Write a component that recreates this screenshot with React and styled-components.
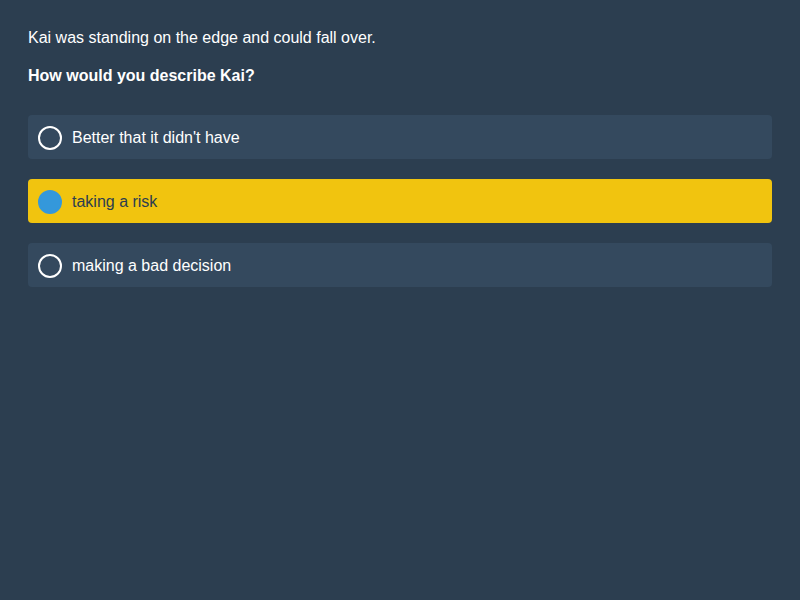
import React, { useState } from "react";
import styled, { createGlobalStyle } from "styled-components";

const GlobalStyle = createGlobalStyle`
  html, body {
    margin: 0;
    padding: 0;
    background: #2c3e50;
  }
  body {
    font-family: "Liberation Sans", Arial, sans-serif;
    min-height: 600px;
  }
`;

const Page = styled.div`
  padding: 29px 28px 28px;
  color: #ffffff;
  font-size: 16px;
`;

const Story = styled.p`
  margin: 0;
  line-height: 18px;
`;

const Question = styled.p`
  margin: 20px 0 30px;
  line-height: 18px;
  font-weight: 700;
`;

const Options = styled.div`
  display: flex;
  flex-direction: column;
  gap: 20px;
`;

const Option = styled.label`
  display: flex;
  align-items: center;
  gap: 10px;
  height: 44px;
  padding: 2px 10px 0;
  border-radius: 4px;
  box-sizing: border-box;
  cursor: pointer;
  background: ${({ selected }) => (selected ? "#f1c40f" : "#34495e")};
  color: ${({ selected }) => (selected ? "#2c3e50" : "#ffffff")};
`;

const Radio = styled.span`
  width: 24px;
  height: 24px;
  border-radius: 50%;
  box-sizing: border-box;
  flex-shrink: 0;
  border: 2px solid ${({ selected }) => (selected ? "#3498db" : "#ffffff")};
  background: ${({ selected }) => (selected ? "#3498db" : "transparent")};
`;

const answers = ["Better that it didn't have", "taking a risk", "making a bad decision"];

export default function App() {
  const [picked, setPicked] = useState(1);
  return (
    <>
      <GlobalStyle />
      <Page>
        <Story>Kai was standing on the edge and could fall over.</Story>
        <Question>How would you describe Kai?</Question>
        <Options>
          {answers.map((a, i) => (
            <Option key={a} selected={picked === i} onClick={() => setPicked(i)}>
              <Radio selected={picked === i} />
              {a}
            </Option>
          ))}
        </Options>
      </Page>
    </>
  );
}
